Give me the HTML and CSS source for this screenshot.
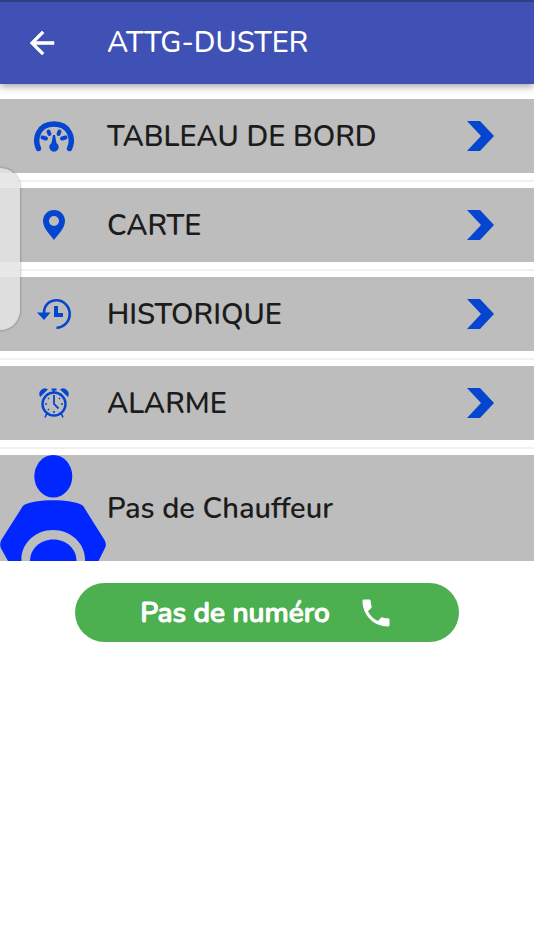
FILE: index.html
```html
<!DOCTYPE html>
<html lang="fr">
<head>
<meta charset="utf-8">
<meta name="viewport" content="width=device-width, initial-scale=1">
<title>ATTG-DUSTER</title>
<link rel="stylesheet" href="styles.css">
</head>
<body>
<header class="bar">
  <button class="back" type="button" aria-label="Retour">
    <svg width="36" height="36" viewBox="0 0 24 24"><path fill="#fff" stroke="#fff" stroke-width=".4" d="M20 11H7.800l5.600-5.600L12 4l-8 8 8 8 1.400-1.400L7.800 13H20z"/></svg>
  </button>
  <h1 class="title">ATTG-DUSTER</h1>
</header>
<main>
  <nav class="menu">
    <a class="row" href="#tableau">
      <svg class="icon" width="40" height="32" viewBox="0 0 40 32">
        <path d="M4.500 28.500C0 19 4 4 20 4S40 19 35.500 28.500" fill="none" stroke="#0645cf" stroke-width="5.400" stroke-linecap="round"/>
        <path d="M8.500 17.500l3.500 1M14.500 11.500l1 2.500M25.500 11.500l-1 2.500M31.500 17.500l-3.500 1" fill="none" stroke="#0645cf" stroke-width="4" stroke-linecap="round"/>
        <path d="M19 15h2l1.500 8a4.700 4.700 0 1 1-5 0z" fill="#0645cf"/>
      </svg>
      <span class="label">TABLEAU DE BORD</span>
      <svg class="chevron" width="27" height="30" viewBox="0 0 27 30"><path fill="#0645cf" d="M0 0h13l14 15-14 15H0l14-15z"/></svg>
    </a>
    <a class="row" href="#carte">
      <svg class="icon" width="22" height="30" viewBox="0 0 22 30"><path fill="#0645cf" fill-rule="evenodd" d="M11 0C4.800 0 0 4.800 0 11c0 7.500 7.500 14 11 19 3.500-5 11-11.500 11-19C22 4.800 17.200 0 11 0zm0 6a5 5 0 1 1 0 10 5 5 0 0 1 0-10z"/></svg>
      <span class="label">CARTE</span>
      <svg class="chevron" width="27" height="30" viewBox="0 0 27 30"><path fill="#0645cf" d="M0 0h13l14 15-14 15H0l14-15z"/></svg>
    </a>
    <a class="row" href="#historique">
      <svg class="icon" width="34" height="30" viewBox="0 0 34 30">
        <path d="M7 14C7 6 12.500 1.300 19.500 1.300A13.200 13.700 0 0 1 19.500 28.700" fill="none" stroke="#0645cf" stroke-width="2.600"/>
        <path d="M0 13.500h13.500L7 21zM17 7h4v7h5v4h-9z" fill="#0645cf"/>
      </svg>
      <span class="label">HISTORIQUE</span>
      <svg class="chevron" width="27" height="30" viewBox="0 0 27 30"><path fill="#0645cf" d="M0 0h13l14 15-14 15H0l14-15z"/></svg>
    </a>
    <a class="row" href="#alarme">
      <svg class="icon" width="30" height="30" viewBox="0 0 30 30">
        <g fill="none" stroke="#0645cf">
          <circle cx="15" cy="16" r="11.500" stroke-width="2.400"/>
          <path d="M15 1v4M12.500 1.500h5M15 7v9l4.500 4.500" stroke-width="1.800"/>
          <path d="M7.500 26l-1.500 3.500M22.500 26l1.500 3.500M6 16h2M22 16h2M15 23v2M9 10l1 1M21 10l-1 1M9 22l1-1" stroke-width="1.600"/>
        </g>
        <path fill="#0645cf" stroke="#0645cf" stroke-width=".8" d="M1.200 8.500C-1 3.500 4-1 8.500 1.500zM28.800 8.500C31 3.500 26-1 21.500 1.500z"/>
      </svg>
      <span class="label">ALARME</span>
      <svg class="chevron" width="27" height="30" viewBox="0 0 27 30"><path fill="#0645cf" d="M0 0h13l14 15-14 15H0l14-15z"/></svg>
    </a>
  </nav>
  <section class="driver">
    <svg width="106" height="106" viewBox="0 0 106 106">
      <g fill="#0226ff">
        <ellipse cx="53.300" cy="21.300" rx="19" ry="21.300"/>
        <path d="M24 50C34 43.500 72 43.500 82 50q2 1.500 3 4L104.500 85q2.500 4 .5 8l-6.500 13H85c1-17-14-31-32-31S20.500 89 21.500 106H8L.8 93q-1.500-4 .5-8L21 54q1-2.500 3-4z"/>
        <path d="M30 106c0-12 10-21.500 23.300-21.500S76.500 94 76.500 106z"/>
      </g>
    </svg>
    <span class="label">Pas de Chauffeur</span>
  </section>
  <button class="call" type="button">
    <span>Pas de numéro</span>
    <svg width="36" height="36" viewBox="0 0 24 24"><path fill="#fff" d="M6.620 10.790c1.440 2.830 3.760 5.140 6.590 6.590l2.200-2.200c.27-.27.67-.36 1.020-.24 1.120.37 2.330.57 3.570.57.550 0 1 .45 1 1V20c0 .55-.45 1-1 1C10.610 21 3 13.390 3 4c0-.55.450-1 1-1h3.500c.55 0 1 .45 1 1 0 1.250.2 2.450.57 3.570.11.35.03.74-.25 1.020z"/></svg>
  </button>
</main>
<div class="drawer-handle"></div>
</body>
</html>
```
FILE: styles.css
```css
* { box-sizing: border-box; }
body {
  margin: 0;
  background: #fff;
  color: #1c1c1c;
  font-family: Nunito, Lato, sans-serif;
  font-size: 29px;
  font-weight: 600;
  line-height: 38px;
}
.bar {
  display: flex;
  align-items: center;
  height: 84px;
  padding-left: 24px;
  border-top: 2px solid #303f85;
  background: #3f51b5;
  box-shadow: 0 2px 8px rgba(0, 0, 0, 0.4);
  color: #fff;
}
.back {
  display: flex;
  width: 83px;
  padding: 0;
  border: 0;
  background: none;
}
.title {
  margin: 0;
  font-size: 29px;
  font-weight: 500;
}
.menu { padding-top: 15px; }
.row {
  display: grid;
  grid-template-columns: 107px 1fr auto;
  align-items: center;
  height: 74px;
  margin-bottom: 15px;
  padding-right: 40px;
  background: #bdbdbd;
  box-shadow: 0 7px #fff, 0 9px #f1f1f1;
  color: inherit;
  text-decoration: none;
}
.label { padding-top: 2px; }
.icon { justify-self: center; }
.driver {
  display: flex;
  align-items: center;
  gap: 1px;
  background: #bdbdbd;
}
.call {
  display: flex;
  align-items: center;
  justify-content: center;
  gap: 28px;
  width: 72%;
  height: 59px;
  margin: 22px auto 0;
  padding: 0;
  border: 0;
  border-radius: 30px;
  background: #4caf50;
  color: #fff;
  font: inherit;
  font-size: 28px;
  font-weight: 600;
  -webkit-text-stroke: 1px;
}
.drawer-handle {
  position: absolute;
  top: 168px;
  left: 0;
  width: 20px;
  height: 162px;
  border-radius: 0 20px 20px 0;
  background: rgba(228, 228, 228, 0.85);
  box-shadow: 0 0 3px rgba(0, 0, 0, 0.4);
}
```
